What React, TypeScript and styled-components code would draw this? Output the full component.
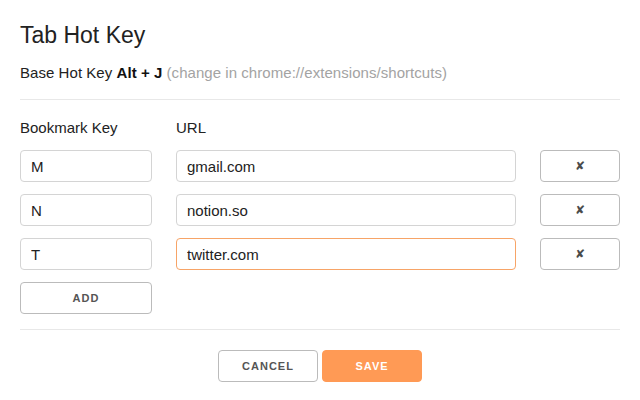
import React from "react";
import styled, { createGlobalStyle } from "styled-components";

const Global = createGlobalStyle`
  html, body { margin: 0; padding: 0; background: #fff; }
  body { font-family: "Liberation Sans", Arial, Helvetica, sans-serif; color: #222; }
  * { box-sizing: border-box; }
`;

const Page = styled.div`
  width: 640px;
  padding: 20px 20px 0 20px;
`;

const Title = styled.h1`
  margin: 0;
  font-size: 23px;
  line-height: 30px;
  font-weight: 400;
  color: #222;
`;

const Subtitle = styled.p`
  margin: 13px 0 0 0;
  font-size: 15px;
  line-height: 20px;
  letter-spacing: 0.05px;
  color: #222;
  b { font-weight: 700; color: #111; }
`;

const Hint = styled.span`
  color: #a3a3a3;
`;

const Rule = styled.hr<{ $top: number }>`
  margin: ${(p) => p.$top}px 0 0 0;
  border: 0;
  border-top: 1px solid #e8e8e8;
  height: 0;
`;

const Grid = styled.div`
  margin-top: 18px;
  display: grid;
  grid-template-columns: 132px 1fr 80px;
  column-gap: 24px;
  row-gap: 12px;
`;

const Label = styled.div`
  font-size: 15px;
  line-height: 20px;
  color: #222;
`;

const Field = styled.input<{ $focus?: boolean }>`
  height: 32px;
  width: 100%;
  padding: 0 10px;
  font-family: "Liberation Sans", Arial, sans-serif;
  font-size: 15px;
  color: #222;
  background: #fff;
  border: 1px solid ${(p) => (p.$focus ? "#f7a467" : "#d4d4d4")};
  border-radius: 4px;
  outline: none;
`;

const Button = styled.button<{ $primary?: boolean; $w?: string }>`
  height: 32px;
  width: ${(p) => p.$w || "100%"};
  padding: 0;
  font-family: "Liberation Sans", Arial, sans-serif;
  font-size: 11px;
  font-weight: 700;
  letter-spacing: 1px;
  text-transform: uppercase;
  color: ${(p) => (p.$primary ? "#fff" : "#555")};
  background: ${(p) => (p.$primary ? "#ff9a55" : "#fff")};
  border: 1px solid ${(p) => (p.$primary ? "#ff9a55" : "#bbb")};
  border-radius: 4px;
  cursor: pointer;
`;

const Cross = styled.span`
  font-family: "DejaVu Sans", sans-serif;
  font-size: 12px;
  letter-spacing: 0;
  color: #4a4a4a;
`;

const Footer = styled.div`
  margin-top: 20px;
  display: flex;
  justify-content: center;
  gap: 4px;
`;

const rows = [
  { key: "M", url: "gmail.com" },
  { key: "N", url: "notion.so" },
  { key: "T", url: "twitter.com", focus: true },
];

export default function App() {
  return (
    <>
      <Global />
      <Page>
        <Title>Tab Hot Key</Title>
        <Subtitle>
          Base Hot Key <b>Alt + J</b> <Hint>(change in chrome://extensions/shortcuts)</Hint>
        </Subtitle>
        <Rule $top={16} />
        <Grid>
          <Label>Bookmark Key</Label>
          <Label>URL</Label>
          <div />
          {rows.map((r) => (
            <React.Fragment key={r.key}>
              <Field defaultValue={r.key} />
              <Field defaultValue={r.url} $focus={r.focus} />
              <Button>
                <Cross>✘</Cross>
              </Button>
            </React.Fragment>
          ))}
          <Button>Add</Button>
        </Grid>
        <Rule $top={15} />
        <Footer>
          <Button $w="100px">Cancel</Button>
          <Button $w="100px" $primary>
            Save
          </Button>
        </Footer>
      </Page>
    </>
  );
}
